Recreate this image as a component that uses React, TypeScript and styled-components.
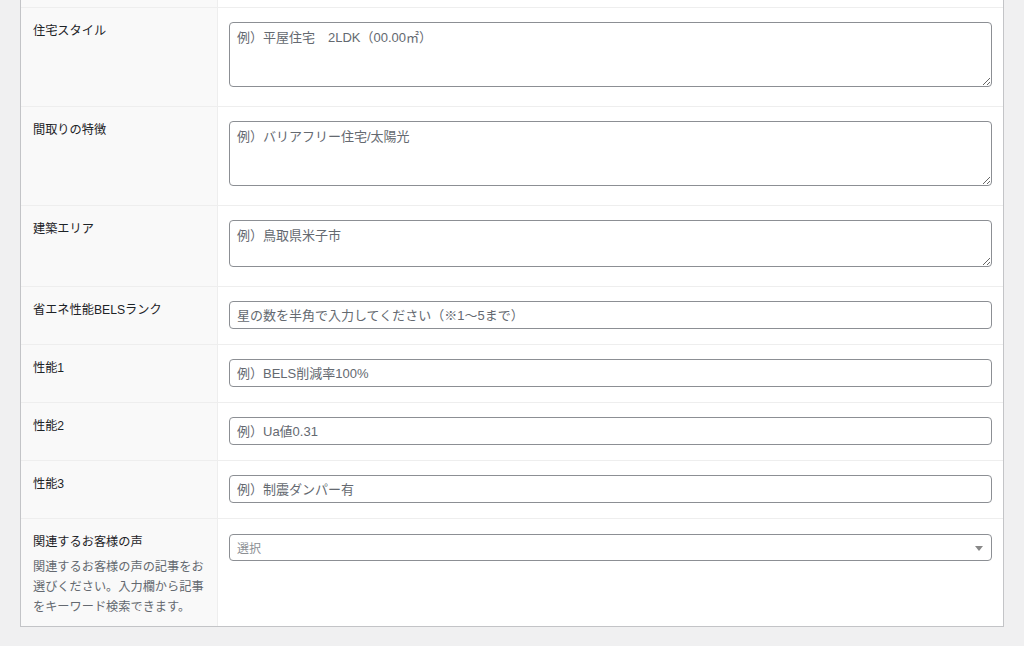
import React from "react";
import styled, { createGlobalStyle } from "styled-components";

const GlobalStyle = createGlobalStyle`
    html, body {
        margin: 0;
        padding: 0;
        background: #f0f0f1;
        overflow: hidden;
    }
    body {
        font-family: "Liberation Sans", "Noto Sans CJK JP", sans-serif;
        color: #1d2327;
    }
`

const Page = styled.div`
    width: 1024px;
    height: 646px;
    padding: 0 20px;
    box-sizing: border-box;
`
const Panel = styled.div`
    background: #fff;
    border: 1px solid #c3c4c7;
    border-top: none;
`
const Row = styled.div`
    display: grid;
    grid-template-columns: 197px 1fr;
    border-top: 1px solid #eeeeee;

    &:first-child {
        border-top: none;
    }
`
const LabelCell = styled.div<{ $pb?: number }>`
    background: #f9f9f9;
    border-right: 1px solid #eeeeee;
    padding: 14px 12px ${p => p.$pb ?? 15}px;
    box-sizing: border-box;
`
const InputCell = styled.div`
    padding: 14px 11px 15px 11px;
    box-sizing: border-box;
`
const TopStub = styled.div`
    height: 7px;
    background: #f9f9f9;
    border-right: 1px solid #eeeeee;
`
const Label = styled.label`
    display: block;
    font-size: 12.2px;
    line-height: 18px;
    font-weight: 400;
    color: #1d2327;
`
const Description = styled.p`
    margin: 6px 0 0;
    font-size: 12.2px;
    line-height: 20px;
    color: #646970;
`
const TextArea = styled.textarea<{ $h: number }>`
    display: block;
    width: 100%;
    height: ${p => p.$h}px;
    margin: 0 0 4px;
    box-sizing: border-box;
    border: 1px solid #8c8f94;
    border-radius: 4px;
    padding: 5px 7px;
    font-family: inherit;
    font-size: 13px;
    line-height: 19px;
    color: #2c3338;
    resize: vertical;
    &::placeholder {
        color: #646970;
    }
`
const TextInput = styled.input`
    display: block;
    width: 100%;
    height: 28px;
    box-sizing: border-box;
    border: 1px solid #8c8f94;
    border-radius: 4px;
    padding: 0 7px;
    font-family: inherit;
    font-size: 13px;
    color: #2c3338;
    &::placeholder {
        color: #646970;
    }
`
const Select = styled.div`
    position: relative;
    display: flex;
    align-items: center;
    height: 27px;
    box-sizing: border-box;
    border: 1px solid #8c8f94;
    border-radius: 4px;
    padding: 0 7px;
    font-size: 12px;
    color: #8c8f94;
    margin-top: 1px;
`
const Arrow = styled.span`
    position: absolute;
    right: 8px;
    top: 11px;
    width: 0;
    height: 0;
    border-left: 4px solid transparent;
    border-right: 4px solid transparent;
    border-top: 5px solid #888;
`

type Field = { label: string; placeholder: string; kind: "textarea" | "input"; h?: number };

const fields: Field[] = [
    { label: "住宅スタイル", placeholder: "例）平屋住宅　2LDK（00.00㎡）", kind: "textarea", h: 65 },
    { label: "間取りの特徴", placeholder: "例）バリアフリー住宅/太陽光", kind: "textarea", h: 65 },
    { label: "建築エリア", placeholder: "例）鳥取県米子市", kind: "textarea", h: 47 },
    { label: "省エネ性能BELSランク", placeholder: "星の数を半角で入力してください（※1〜5まで）", kind: "input" },
    { label: "性能1", placeholder: "例）BELS削減率100%", kind: "input" },
    { label: "性能2", placeholder: "例）Ua値0.31", kind: "input" },
    { label: "性能3", placeholder: "例）制震ダンパー有", kind: "input" },
];

export default function App() {
    return (
        <Page>
            <GlobalStyle />
            <Panel>
                <Row>
                    <TopStub />
                    <div />
                </Row>
                {fields.map(f => (
                    <Row key={f.label}>
                        <LabelCell>
                            <Label>{f.label}</Label>
                        </LabelCell>
                        <InputCell>
                            {f.kind === "textarea"
                                ? <TextArea $h={f.h || 65} placeholder={f.placeholder} />
                                : <TextInput placeholder={f.placeholder} />}
                        </InputCell>
                    </Row>
                ))}
                <Row>
                    <LabelCell $pb={9}>
                        <Label>関連するお客様の声</Label>
                        <Description>関連するお客様の声の記事をお選びください。入力欄から記事をキーワード検索できます。</Description>
                    </LabelCell>
                    <InputCell>
                        <Select>
                            選択
                            <Arrow />
                        </Select>
                    </InputCell>
                </Row>
            </Panel>
        </Page>
    )
}
